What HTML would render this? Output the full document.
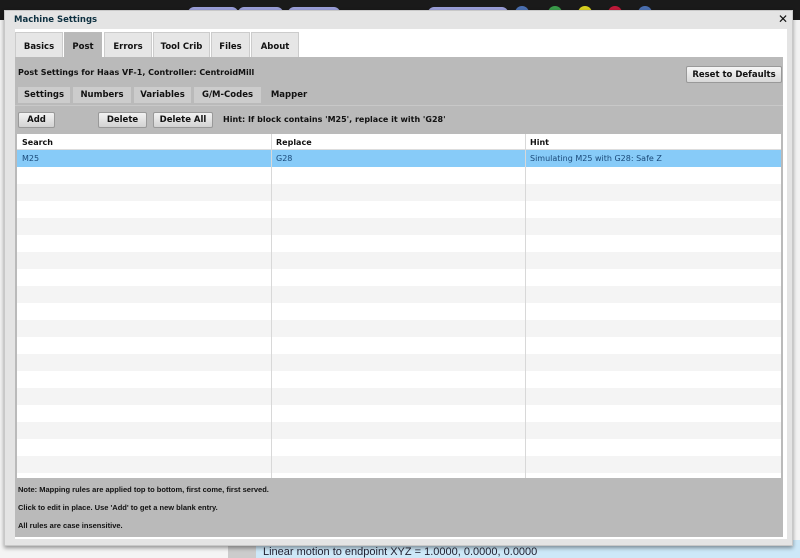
<!DOCTYPE html>
<html><head><meta charset="utf-8"><style>
*{box-sizing:border-box;margin:0;padding:0}
body{width:800px;height:558px;overflow:hidden;position:relative;background:#f2f2f2;font-family:"DejaVu Sans","Liberation Sans",sans-serif;font-size:9px;color:#111}
.top{position:absolute;left:0;top:0;width:800px;height:20px;background:#1a1a1a}
.pill{position:absolute;top:7px;height:12px;border-radius:6px;background:#9a9ed8}
.dot{position:absolute;top:6px;width:14px;height:14px;border-radius:7px}
.bot{position:absolute;left:0;top:530px;width:800px;height:28px;background:#f4f4f4}
.bot .g{position:absolute;left:228px;top:0;width:28px;height:28px;background:#ccc}
.bot .b{position:absolute;left:256px;top:10px;width:544px;height:18px;background:#cde8f8;font-family:"Liberation Sans",sans-serif;font-size:11px;color:#223;padding:6px 0 0 7px}
.dlg{position:absolute;left:4px;top:10px;width:789px;height:536px;background:#e4e4e4;border:1px solid #c8c8c8;box-shadow:0 2px 4px rgba(0,0,0,.4)}
.title{position:absolute;left:9px;top:4px;font-weight:bold;font-size:8.5px;color:#0d3040}
.x{position:absolute;right:4px;top:1px;font-weight:bold;font-size:12px}
.panel{position:absolute;left:10px;top:18px;width:772px;height:510px;background:#fff}
.tab{position:absolute;top:3px;height:26px;background:#e6e6e6;border:1px solid #ccc;border-bottom:none;font-weight:bold;font-size:8.5px;text-align:center;padding-top:9px}
.tab.on{background:#bababa;border-color:#bababa}
.gray{position:absolute;left:0;top:28px;width:768px;height:480px;background:#bababa}
.hdr{position:absolute;left:3px;top:11px;font-weight:bold;font-size:8px}
.reset{position:absolute;left:671px;top:9px;width:96px;height:17px;background:linear-gradient(#f6f6f6,#d8d8d8);border:1px solid #999;border-radius:2px;font-weight:bold;font-size:8.5px;text-align:center;padding-top:3px}
.subbar{position:absolute;left:0;top:48px;width:768px;height:1px;background:#c8c8c8}
.st{position:absolute;top:30px;height:16px;background:#ccc;font-weight:bold;font-size:8.5px;text-align:center;padding-top:3px}
.btn{position:absolute;top:55px;height:16px;background:linear-gradient(#f2f2f2,#d2d2d2);border:1px solid #999;border-radius:2px;font-weight:bold;font-size:8.5px;text-align:center;padding-top:2px}
.hint{position:absolute;left:208px;top:58px;font-weight:bold;font-size:8px}
.tbl{position:absolute;left:2px;top:77px;width:764px;height:344px;background:#fff;overflow:hidden}
.row{position:absolute;left:0;width:764px;height:17px}
.c{position:absolute;top:0;height:17px;padding:4px 0 0 5px;font-size:8px}
.vl{position:absolute;top:0;width:1px;height:344px;background:#d8d8d8}
.note{position:absolute;left:3px;font-weight:bold;font-size:7.5px;font-family:"Liberation Sans",sans-serif}
</style></head><body>
<div class="top">
<div class="pill" style="left:188px;width:50px"></div>
<div class="pill" style="left:238px;width:45px"></div>
<div class="pill" style="left:288px;width:52px"></div>
<div class="pill" style="left:428px;width:80px"></div>
<div class="dot" style="left:515px;background:#4a6fb0"></div>
<div class="dot" style="left:548px;background:#3a9a4a"></div>
<div class="dot" style="left:578px;background:#d8d020"></div>
<div class="dot" style="left:608px;background:#c01a3a"></div>
<div class="dot" style="left:638px;background:#4a6fb0"></div>
</div>
<div class="bot"><div class="g"></div><div class="b">Linear motion to endpoint XYZ = 1.0000, 0.0000, 0.0000</div></div>
<div class="dlg">
<div class="title">Machine Settings</div>
<div class="x">✕</div>
<div class="panel">
<div class="tab" style="left:0;width:48px">Basics</div>
<div class="tab on" style="left:49px;width:38px">Post</div>
<div class="tab" style="left:89px;width:48px">Errors</div>
<div class="tab" style="left:138px;width:57px">Tool Crib</div>
<div class="tab" style="left:196px;width:39px">Files</div>
<div class="tab" style="left:236px;width:48px">About</div>
<div class="gray">
<div class="hdr">Post Settings for Haas VF-1, Controller: CentroidMill</div>
<div class="reset">Reset to Defaults</div>
<div class="subbar"></div>
<div class="st" style="left:3px;width:52px">Settings</div>
<div class="st" style="left:58px;width:58px">Numbers</div>
<div class="st" style="left:119px;width:57px">Variables</div>
<div class="st" style="left:179px;width:67px">G/M-Codes</div>
<div class="st" style="left:248px;width:52px;background:none">Mapper</div>
<div class="btn" style="left:3px;width:37px">Add</div>
<div class="btn" style="left:83px;width:49px">Delete</div>
<div class="btn" style="left:138px;width:60px">Delete All</div>
<div class="hint">Hint: If block contains 'M25', replace it with 'G28'</div>
<div class="tbl">
<div class="row" style="top:0;height:16px;border-bottom:1px solid #ddd"><div class="c" style="left:0;font-weight:bold">Search</div><div class="c" style="left:254px;font-weight:bold">Replace</div><div class="c" style="left:508px;font-weight:bold">Hint</div></div>
<div class="row" style="top:16px;background:#87cbf8;color:#1a4a7a"><div class="c" style="left:0">M25</div><div class="c" style="left:254px">G28</div><div class="c" style="left:508px">Simulating M25 with G28: Safe Z</div></div>
<div class="row" style="top:50px;background:#f4f4f4"></div>
<div class="row" style="top:84px;background:#f4f4f4"></div>
<div class="row" style="top:118px;background:#f4f4f4"></div>
<div class="row" style="top:152px;background:#f4f4f4"></div>
<div class="row" style="top:186px;background:#f4f4f4"></div>
<div class="row" style="top:220px;background:#f4f4f4"></div>
<div class="row" style="top:254px;background:#f4f4f4"></div>
<div class="row" style="top:288px;background:#f4f4f4"></div>
<div class="row" style="top:322px;background:#f4f4f4"></div>
<div class="vl" style="left:254px"></div><div class="vl" style="left:508px"></div>
</div>
<div class="note" style="top:428px">Note: Mapping rules are applied top to bottom, first come, first served.</div>
<div class="note" style="top:446px">Click to edit in place. Use 'Add' to get a new blank entry.</div>
<div class="note" style="top:464px">All rules are case insensitive.</div>
</div>
</div>
</div>
</body></html>
